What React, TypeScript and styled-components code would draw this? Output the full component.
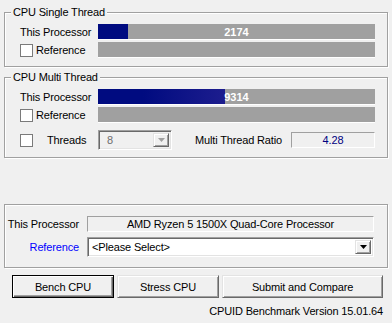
import React from "react";
import styled, { createGlobalStyle } from "styled-components";

const GlobalStyle = createGlobalStyle`
  html, body {
    margin: 0;
    padding: 0;
    background: #f0f0f0;
  }
  body {
    font-family: "Liberation Sans", Arial, sans-serif;
    font-size: 11px;
    color: #000;
  }
`;

type Score = { label: string; score: number | null };

const SCALE = 20300;

const single: Score[] = [
  { label: "This Processor", score: 2174 },
  { label: "Reference", score: null },
];

const multi: Score[] = [
  { label: "This Processor", score: 9314 },
  { label: "Reference", score: null },
];

const DropArrow: React.FC<{ disabled?: boolean }> = ({ disabled }) => (
  <svg width="7" height="4" viewBox="0 0 7 4">
    <polygon points="0,0 7,0 3.5,4" fill={disabled ? "#a0a0a0" : "#000"} />
  </svg>
);

const ScoreRow: React.FC<{ row: Score }> = ({ row }) => (
  <>
    <RowLabel>
      {row.score === null && <CheckBox />}
      {row.label}
    </RowLabel>
    <Bar>
      {row.score !== null && (
        <>
          <Fill style={{ width: Math.round((row.score / SCALE) * 277) }} />
          <BarValue>{row.score}</BarValue>
        </>
      )}
    </Bar>
  </>
);

export default function App() {
  return (
    <>
      <GlobalStyle />
      <Window>
        <Group>
          <Title>CPU Single Thread</Title>
          <ScoreGrid>
            {single.map((r) => (
              <ScoreRow key={r.label} row={r} />
            ))}
          </ScoreGrid>
        </Group>

        <Group $mt={4}>
          <Title>CPU Multi Thread</Title>
          <ScoreGrid>
            {multi.map((r) => (
              <ScoreRow key={r.label} row={r} />
            ))}
          </ScoreGrid>
          <ThreadsRow>
            <RowLabel>
              <CheckBox />
              <ThreadsText>Threads</ThreadsText>
            </RowLabel>
            <ThreadsControls>
              <Combo $width={74} $height={20} $disabled>
                <ComboText $disabled>8</ComboText>
                <ComboButton $disabled>
                  <DropArrow disabled />
                </ComboButton>
              </Combo>
              <RatioLabel>Multi Thread Ratio</RatioLabel>
              <ReadOnlyBox $width={84} $center $color="#000080">
                4.28
              </ReadOnlyBox>
            </ThreadsControls>
          </ThreadsRow>
        </Group>

        <Group $mt={46} $plain>
          <InfoGrid>
            <InfoLabel>This Processor</InfoLabel>
            <ReadOnlyBox $width={287} $center>
              AMD Ryzen 5 1500X Quad-Core Processor
            </ReadOnlyBox>
            <InfoLabel $link>Reference</InfoLabel>
            <Combo $width={287} $height={20}>
              <ComboText>&lt;Please Select&gt;</ComboText>
              <ComboButton>
                <DropArrow />
              </ComboButton>
            </Combo>
          </InfoGrid>
        </Group>

        <ButtonRow>
          <Button $default $width={102}>
            Bench CPU
          </Button>
          <Button $width={102}>Stress CPU</Button>
          <Button $width={161}>Submit and Compare</Button>
        </ButtonRow>

        <Version>CPUID Benchmark Version 15.01.64</Version>
      </Window>
    </>
  );
}

const Window = styled.div`
  width: 392px;
  height: 323px;
  box-sizing: border-box;
  padding: 6px 4px 0 4px;
  display: flex;
  flex-direction: column;
  letter-spacing: -0.15px;
`;

const Group = styled.fieldset<{ $mt?: number; $plain?: boolean }>`
  margin: ${(p) => p.$mt ?? 0}px 0 0 0;
  padding: 0;
  min-width: 0;
  width: 384px;
  box-sizing: border-box;
  border: 1px solid #a0a0a0;
  box-shadow: inset 1px 1px 0 #fff, 1px 1px 0 #fff;
`;

const Title = styled.legend`
  margin-left: 6px;
  padding: 0 2px;
  line-height: 13px;
  background: #f0f0f0;
`;

const ScoreGrid = styled.div`
  display: grid;
  grid-template-columns: 93px 277px;
  grid-auto-rows: 16px;
  row-gap: 2px;
  padding: 5px 0 8px 0;
`;

const RowLabel = styled.div`
  display: flex;
  align-items: center;
  padding-left: 15px;
  white-space: nowrap;
`;

const CheckBox = styled.span`
  display: inline-block;
  width: 11px;
  height: 11px;
  border: 1px solid #7a7a7a;
  background: #fff;
  margin-right: 3px;
  flex: none;
`;

const Bar = styled.div`
  position: relative;
  height: 15px;
  background: #a0a0a0;
  border-bottom: 1px solid #fff;
  display: flex;
  align-items: center;
  justify-content: center;
`;

const Fill = styled.div`
  position: absolute;
  left: 0;
  top: 0;
  bottom: 0;
  background: linear-gradient(
    to right,
    #000b80 0px,
    #000b80 45px,
    #1d1d8e 127px
  );
`;

const BarValue = styled.span`
  position: relative;
  color: #fff;
  font-weight: bold;
  letter-spacing: 0;
`;

const ThreadsRow = styled.div`
  display: grid;
  grid-template-columns: 93px 277px;
  height: 20px;
  margin-top: -1px;
  padding-bottom: 7px;
`;

const ThreadsText = styled.span`
  margin-left: 11px;
`;

const ThreadsControls = styled.div`
  display: flex;
  align-items: center;
`;

const RatioLabel = styled.span`
  margin-left: 23px;
`;

const sunken = `
  border-style: solid;
  border-width: 1px;
  border-color: #a0a0a0 #fff #fff #a0a0a0;
`;

const ReadOnlyBox = styled.div<{
  $width: number;
  $center?: boolean;
  $color?: string;
}>`
  ${sunken}
  box-sizing: border-box;
  width: ${(p) => p.$width}px;
  height: 16px;
  margin-left: auto;
  display: flex;
  align-items: center;
  justify-content: ${(p) => (p.$center ? "center" : "flex-start")};
  color: ${(p) => p.$color ?? "#000"};
  background: #f0f0f0;
`;

const Combo = styled.div<{ $width: number; $height: number; $disabled?: boolean }>`
  ${sunken}
  box-sizing: border-box;
  width: ${(p) => p.$width}px;
  height: ${(p) => p.$height}px;
  box-shadow: inset 1px 1px 0 #696969, inset -1px -1px 0 #e3e3e3;
  background: ${(p) => (p.$disabled ? "#f0f0f0" : "#fff")};
  display: flex;
  align-items: center;
  padding: 2px;
`;

const ComboText = styled.span<{ $disabled?: boolean }>`
  flex: 1;
  padding-left: ${(p) => (p.$disabled ? 6 : 2)}px;
  color: ${(p) => (p.$disabled ? "#6d6d6d" : "#000")};
  white-space: nowrap;
`;

const ComboButton = styled.div<{ $disabled?: boolean }>`
  box-sizing: border-box;
  width: 16px;
  height: 100%;
  border-style: solid;
  border-width: 1px;
  border-color: #e3e3e3 #696969 #696969 #e3e3e3;
  box-shadow: inset 1px 1px 0 #fff, inset -1px -1px 0 #a0a0a0;
  background: #f0f0f0;
  display: flex;
  align-items: center;
  justify-content: center;
`;

const InfoGrid = styled.div`
  display: grid;
  grid-template-columns: 82px 287px;
  grid-template-rows: 16px 20px;
  row-gap: 5px;
  align-items: center;
  padding: 11px 0 10px 0;
`;

const InfoLabel = styled.div<{ $link?: boolean }>`
  text-align: right;
  padding-right: 8px;
  white-space: nowrap;
  color: ${(p) => (p.$link ? "#0000ff" : "#000")};
`;

const ButtonRow = styled.div`
  display: flex;
  gap: 3px;
  margin-top: 7px;
  padding-left: 8px;
`;

const Button = styled.button<{ $width: number; $default?: boolean }>`
  box-sizing: border-box;
  width: ${(p) => p.$width}px;
  height: 23px;
  padding: 0;
  font: inherit;
  letter-spacing: inherit;
  color: #000;
  background: #f0f0f0;
  border-style: solid;
  border-width: 1px;
  border-color: ${(p) =>
    p.$default ? "#000" : "#e3e3e3 #696969 #696969 #e3e3e3"};
  box-shadow: ${(p) =>
    p.$default
      ? "inset 1px 1px 0 #fff, inset -1px -1px 0 #696969, inset -2px -2px 0 #a0a0a0"
      : "inset 1px 1px 0 #fff, inset -1px -1px 0 #a0a0a0"};
`;

const Version = styled.div`
  margin-top: 7px;
  padding-right: 5px;
  text-align: right;
  line-height: 13px;
`;
